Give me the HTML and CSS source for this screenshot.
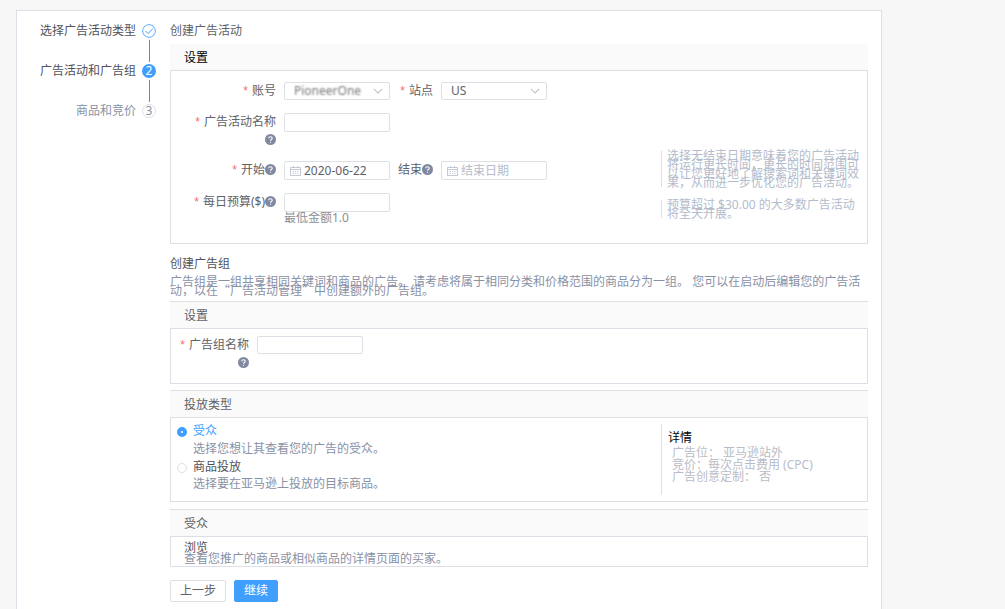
FILE: index.html
```html
<!DOCTYPE html>
<html lang="zh-CN">
<head>
<meta charset="utf-8">
<title>创建广告活动</title>
<link rel="stylesheet" href="styles.css">
</head>
<body>
<svg class="defs" aria-hidden="true">
  <symbol id="help" viewBox="0 0 10 10">
    <circle cx="5" cy="5" r="5" fill="#8089a0"/>
    <path d="M3.4 3.9C3.4 2 6.6 2 6.6 3.9C6.6 5 5 4.9 5 6.2M5 7V8" fill="none" stroke="#fff" stroke-width="1"/>
  </symbol>
  <symbol id="arrow" viewBox="0 0 10 6">
    <path d="M0.8 0.8L5 5L9.2 0.8" fill="none" stroke="#c0c4cc" stroke-width="1.1"/>
  </symbol>
  <symbol id="calendar" viewBox="0 0 11 10">
    <path d="M0.5 1.5H10.5V9.5H0.5ZM0.5 3.5H10.5M3.5 0V2M7.5 0V2M2.5 5.5H4M5 5.5H6.2M7.2 5.5H8.5M2.5 7.5H4M5 7.5H6.2M7.2 7.5H8.5" fill="none" stroke="#b4bccc" stroke-width="0.8"/>
  </symbol>
</svg>
<div class="card">
  <ol class="steps">
    <li class="step"><span>选择广告活动类型</span>
      <svg class="dot" viewBox="0 0 14 14"><circle cx="7" cy="7" r="6.4" fill="#fff" stroke="#409eff"/><path d="M3.4 6.8L6.2 9.6L10.8 4.6" fill="none" stroke="#409eff"/></svg>
    </li>
    <li class="line"></li>
    <li class="step"><span>广告活动和广告组</span><b class="dot dot-on">2</b></li>
    <li class="line"></li>
    <li class="step step-wait"><span>商品和竞价</span><b class="dot dot-wait">3</b></li>
  </ol>
  <main class="main">
    <h1 class="title">创建广告活动</h1>
    <section class="panel panel-first">
      <h2 class="head head-dark">设置</h2>
      <div class="box split">
        <div class="form">
          <div class="row">
            <label class="label req" for="account">账号</label>
            <span class="field"><select id="account" class="masked"><option>PioneerOne</option></select><svg class="arrow"><use href="#arrow"/></svg></span>
            <label class="label label-short req" for="site">站点</label>
            <span class="field"><select id="site"><option>US</option></select><svg class="arrow"><use href="#arrow"/></svg></span>
          </div>
          <div class="row">
            <label class="label req" for="campaign">广告活动名称<br><svg class="help"><use href="#help"/></svg></label>
            <span class="field"><input id="campaign" type="text"></span>
          </div>
          <div class="row">
            <label class="label req" for="start">开始<svg class="help"><use href="#help"/></svg></label>
            <span class="field"><svg class="cal"><use href="#calendar"/></svg><input id="start" type="text" value="2020-06-22"></span>
            <label class="label label-short" for="end">结束<svg class="help"><use href="#help"/></svg></label>
            <span class="field"><svg class="cal"><use href="#calendar"/></svg><input id="end" type="text" placeholder="结束日期"></span>
          </div>
          <div class="row">
            <label class="label req" for="budget">每日预算($)<svg class="help"><use href="#help"/></svg></label>
            <div>
              <span class="field"><input id="budget" type="text"></span>
              <p class="hint">最低金额1.0</p>
            </div>
          </div>
        </div>
        <aside class="notes">
          <p class="note">选择无结束日期意味着您的广告活动将运行更长时间，更长的时间范围可以让您更好地了解搜索词和关键词效果，从而进一步优化您的广告活动。</p>
          <p class="note">预算超过 $30.00 的大多数广告活动将全天开展。</p>
        </aside>
      </div>
    </section>
    <h1 class="title title-group">创建广告组</h1>
    <p class="intro">广告组是一组共享相同关键词和商品的广告。 请考虑将属于相同分类和价格范围的商品分为一组。 您可以在启动后编辑您的广告活动，以在<span class="quote">“</span>广告活动管理<span class="quote">”</span>中创建额外的广告组。</p>
    <section class="panel">
      <h2 class="head">设置</h2>
      <div class="box group">
        <div class="row">
          <label class="label label-group req" for="group">广告组名称<br><svg class="help"><use href="#help"/></svg></label>
          <span class="field"><input id="group" type="text"></span>
        </div>
      </div>
    </section>
    <section class="panel panel-target">
      <h2 class="head">投放类型</h2>
      <div class="box split">
        <div class="choices">
          <label class="choice"><input type="radio" name="target" checked><span>受众</span></label>
          <p class="desc">选择您想让其查看您的广告的受众。</p>
          <label class="choice"><input type="radio" name="target"><span>商品投放</span></label>
          <p class="desc">选择要在亚马逊上投放的目标商品。</p>
        </div>
        <aside class="details">
          <h3 class="details-title">详情</h3>
          <p>广告位： 亚马逊站外</p>
          <p>竞价：每次点击费用 (CPC)</p>
          <p>广告创意定制： 否</p>
        </aside>
      </div>
    </section>
    <section class="panel">
      <h2 class="head">受众</h2>
      <div class="box browse">
        <p>浏览</p>
        <p class="browse-desc">查看您推广的商品或相似商品的详情页面的买家。</p>
      </div>
    </section>
    <div class="actions">
      <button type="button" class="btn">上一步</button>
      <button type="button" class="btn btn-primary">继续</button>
    </div>
  </main>
</div>
</body>
</html>
```
FILE: styles.css
```css
* { box-sizing: border-box; }
body {
  margin: 0;
  padding: 10px 123px 0 16px;
  background: #f7f7f7;
  color: #606266;
  font: 12px/18px "Noto Sans", "Noto Sans CJK SC", sans-serif;
}
h1, h2, h3, p, ol { margin: 0; padding: 0; font-size: 12px; font-weight: 400; }
input, select, button { font: inherit; color: inherit; }
.defs { position: absolute; width: 0; height: 0; }

.card {
  display: flex;
  gap: 14px;
  min-height: calc(100vh - 10px);
  padding: 11px 13px 6px 12px;
  background: #fff;
  border: 1px solid #dcdfe6;
  border-bottom: 0;
}
.steps { flex: 0 0 127px; list-style: none; }
.step { display: flex; justify-content: flex-end; align-items: center; gap: 6px; color: #505259; }
.step-wait { color: #8a91a5; }
.dot { width: 14px; height: 14px; border-radius: 50%; font-weight: 400; line-height: 14px; text-align: center; }
.dot-on { background: #409eff; color: #fff; }
.dot-wait { border: 1px solid #dcdfe6; line-height: 12px; color: #8a91a5; }
.line { width: 1px; height: 22px; margin: 0 6px 0 auto; background: #3a96d8; }

.main { flex: 1; min-width: 0; }
.panel { margin-bottom: 6px; }
.panel-first { margin: 4px 0 11px; }
.panel-target { margin-bottom: 7px; }
.title-group { color: #505259; }
.head { padding: 5px 14px 3px; background: #fafafa; border-top: 1px solid #dcdfe6; }
.head-dark { padding: 4px 14px 3px; color: #000; border-color: #fafafa; }
.box { border: 1px solid #dcdfe6; }
.split { display: flex; }

.form { flex: 1; display: flex; flex-direction: column; gap: 13px; padding: 11px 0 19px; }
.row { display: flex; gap: 8px; align-items: flex-start; }
.label { flex: 0 0 105px; text-align: right; white-space: nowrap; line-height: 17px; }
.label-short { flex-basis: 35px; }
.label-group { flex-basis: 78px; }
.req::before { content: "*"; margin-right: 4px; color: #f56c6c; font-family: "Liberation Sans", sans-serif; }
.help { width: 11px; height: 11px; vertical-align: -1px; }
.field { position: relative; display: flex; align-items: center; width: 106px; height: 19px; border: 1px solid #dcdfe6; border-radius: 2px; background: #fff; }
.row:first-child .field { height: 18px; }
.field input, .field select { flex: 1; min-width: 0; width: 100%; height: 16px; padding: 0 3px; border: 0; outline: 0; background: none; appearance: none; line-height: 16px; }
.field select { padding: 0 20px 0 9px; }
.field .masked { color: transparent; text-shadow: 0 0 2px #777; }
.field input::placeholder { color: #b4bccc; }
.arrow { position: absolute; right: 6px; width: 10px; height: 6px; pointer-events: none; }
.cal { flex: none; width: 11px; height: 10px; margin-left: 5px; }
.hint { line-height: 12px; color: #8c8f96; }
.notes { flex: 0 0 206px; display: flex; flex-direction: column; gap: 13px; padding: 80px 0 0; }
.note { padding: 0 6px 0 5px; border-left: 1px solid #dcdfe6; line-height: 9px; color: #b4bccc; }

.intro { margin: 4px 0 6px; line-height: 9px; color: #8a91a5; }
.quote { font-family: "Noto Sans CJK SC", sans-serif; line-height: 1px; }
.group { padding: 7px 10px 12px 0; }
.group .row { min-height: 35px; }

.choices { flex: 1; padding: 4px 0 9px 6px; }
.choice { display: flex; align-items: center; gap: 6px; color: #505259; }
.choice input { width: 10px; height: 10px; margin: 2px 0 0; appearance: none; border: 1px solid #dcdfe6; border-radius: 50%; background: #fff; }
.choice input:checked { border: 4px solid #409eff; }
.choice input:checked + span { color: #409eff; }
.desc { padding-left: 16px; color: #8a91a5; }
.desc:last-child { line-height: 16px; }
.details { flex: 0 0 206px; margin: 6px 0; padding: 5px 0 0 10px; border-left: 1px solid #dcdfe6; line-height: 12px; color: #b9bcc6; }
.details-title { margin-left: -4px; line-height: 18px; color: #000; }

.browse { padding: 5px 13px 2px; line-height: 11px; color: #505259; }
.browse-desc { color: #8a91a5; }
.actions { display: flex; gap: 8px; padding-top: 7px; }
.btn { height: 22px; padding: 0 9px; border: 1px solid #dcdfe6; border-radius: 2px; background: #fff; line-height: 20px; }
.btn-primary { border-color: #409eff; background: #409eff; color: #fff; }
```
